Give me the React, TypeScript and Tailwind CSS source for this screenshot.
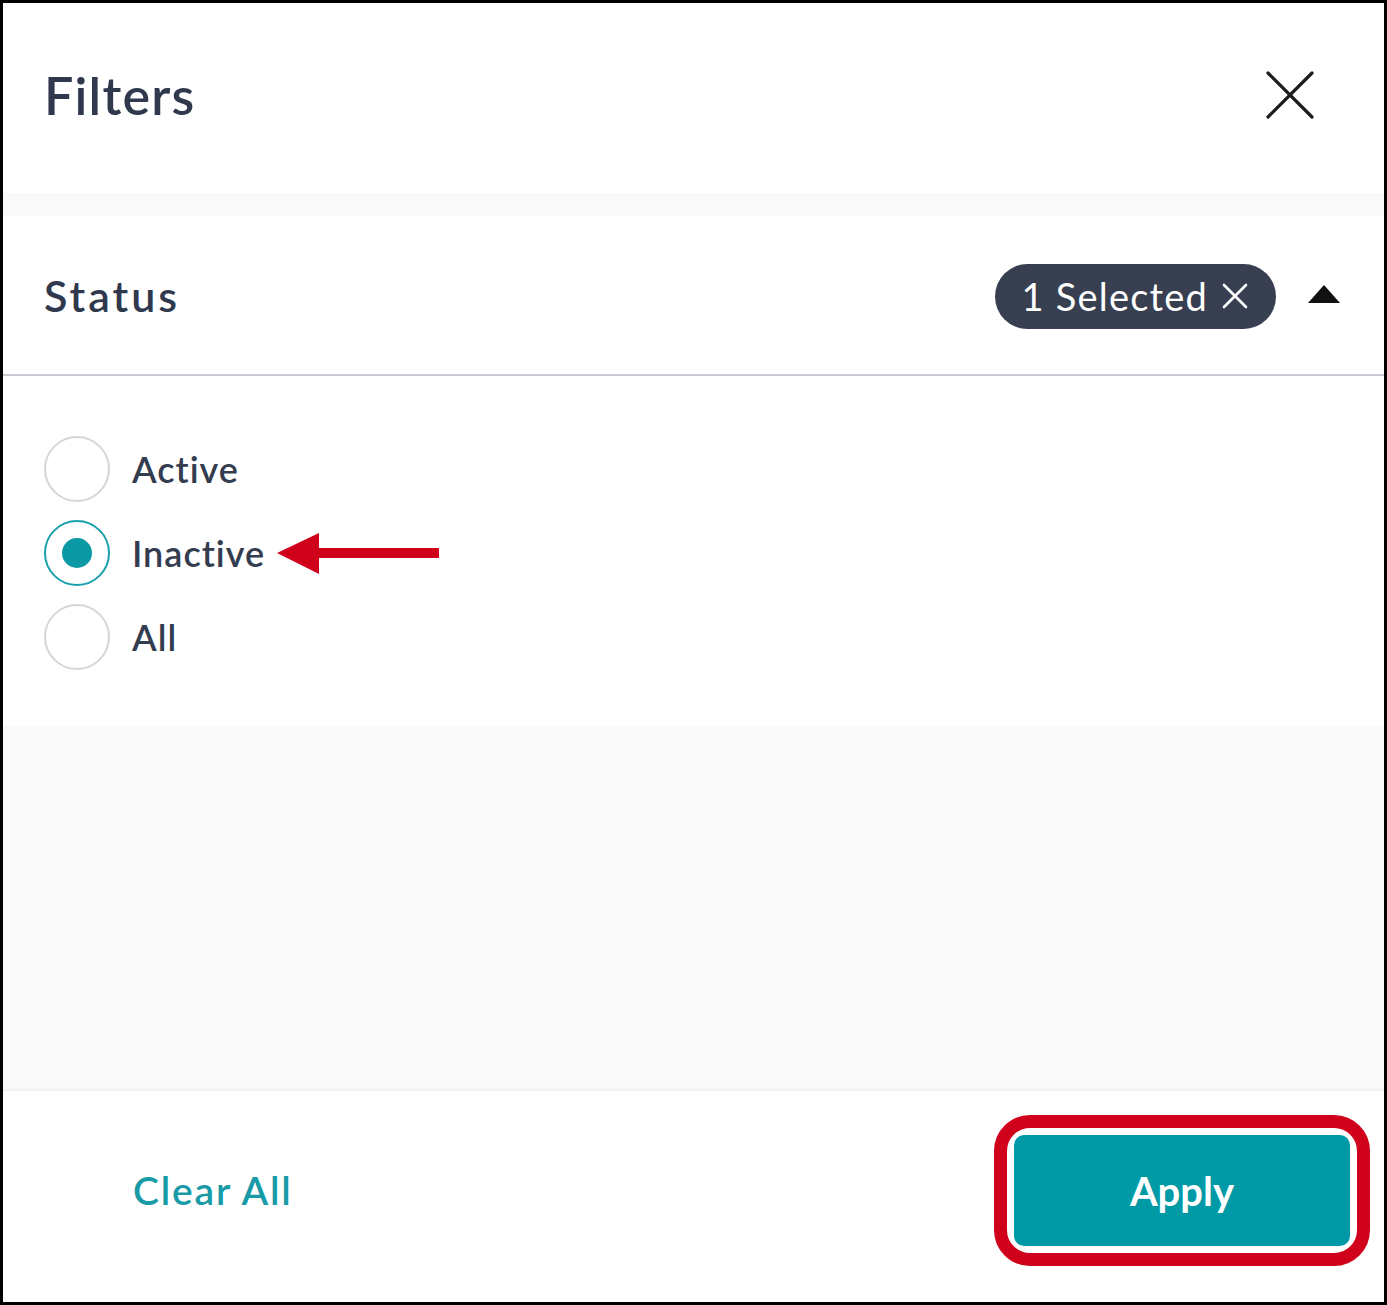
import React, { useState } from 'react';

const OPTIONS = ['Active', 'Inactive', 'All'];

function CloseIcon() {
  return (
    <svg width="48" height="48" viewBox="0 0 48 48" fill="none">
      <path d="M2 2 L46 46 M46 2 L2 46" stroke="#1c1c1c" strokeWidth="3.2" strokeLinecap="round" />
    </svg>
  );
}

function Radio({ label, checked, onSelect }: { label: string; checked: boolean; onSelect: () => void }) {
  return (
    <button onClick={onSelect} className="flex items-center gap-[22px] text-left">
      <span
        className={
          checked
            ? 'w-[66px] h-[66px] rounded-full border-2 border-[#1aa1ac] flex items-center justify-center bg-white'
            : 'w-[66px] h-[66px] rounded-full border-2 border-[#d3d7db] bg-white'
        }
      >
        {checked && <span className="w-[30px] h-[30px] rounded-full bg-[#0a99a5]" />}
      </span>
      <span className="text-[36px] font-semibold text-[#343c4f] leading-none tracking-[1px]">{label}</span>
    </button>
  );
}

export default function App() {
  const [selected, setSelected] = useState('Inactive');

  return (
    <div
      className="w-[1387px] h-[1305px] border-[3px] border-black bg-white flex flex-col relative"
      style={{ fontFamily: 'Lato, "Noto Sans", sans-serif' }}
    >
      {/* header */}
      <div className="h-[190px] flex items-center justify-between pl-[41px] pr-[70px] shrink-0">
        <h1 className="text-[52px] font-semibold text-[#2f384c] leading-none pb-[6px] tracking-[1.2px]">Filters</h1>
        <button className="pb-[6px]">
          <CloseIcon />
        </button>
      </div>
      <div className="h-[23px] bg-[#f9f9f9] shrink-0" />

      {/* status group */}
      <div className="h-[160px] flex items-center justify-between pl-[41px] pr-[44px] border-b-2 border-[#c7cbd1] shrink-0">
        <h2 className="text-[43px] font-semibold text-[#2f384c] leading-none tracking-[3px]">Status</h2>
        <div className="flex items-center gap-[32px] pt-[2px]">
          <span className="h-[65px] rounded-full bg-[#373f51] flex items-center gap-[14px] pl-[27px] pr-[28px]">
            <span className="text-[38px] text-white leading-none tracking-[1.2px]">1 Selected</span>
            <svg width="26" height="26" viewBox="0 0 26 26" fill="none">
              <path d="M2 2 L24 24 M24 2 L2 24" stroke="#ffffff" strokeWidth="2.6" strokeLinecap="round" />
            </svg>
          </span>
          <svg width="32" height="18" viewBox="0 0 32 18" className="mb-[4px]">
            <path d="M16 0 L32 18 L0 18 Z" fill="#111111" />
          </svg>
        </div>
      </div>

      <div className="flex flex-col gap-[18px] pl-[41px] pt-[60px] pb-[56px] shrink-0">
        {OPTIONS.map((o) => (
          <Radio key={o} label={o} checked={selected === o} onSelect={() => setSelected(o)} />
        ))}
      </div>

      <div className="flex-1 bg-[#f9f9f9] border-b-2 border-[#f1f1f1]" />

      {/* footer */}
      <div className="h-[211px] flex items-center justify-between pl-[130px] pr-[14px] pb-[12px] shrink-0">
        <button className="text-[39px] font-semibold text-[#189ba7] leading-none tracking-[1.8px]">Clear All</button>
        <div className="rounded-[36px] border-[13px] border-[#d0021b] p-[7px]">
          <button className="w-[336px] h-[111px] rounded-[10px] bg-[#009aa6] text-white text-[40px] font-bold leading-none">
            Apply
          </button>
        </div>
      </div>

      {/* callout arrow */}
      <svg className="absolute left-[271px] top-[527px]" width="165" height="44" viewBox="0 0 165 44">
        <path d="M3 23 L45 3 L45 18 L165 18 L165 28 L45 28 L45 44 Z" fill="#d0021b" />
      </svg>
    </div>
  );
}
